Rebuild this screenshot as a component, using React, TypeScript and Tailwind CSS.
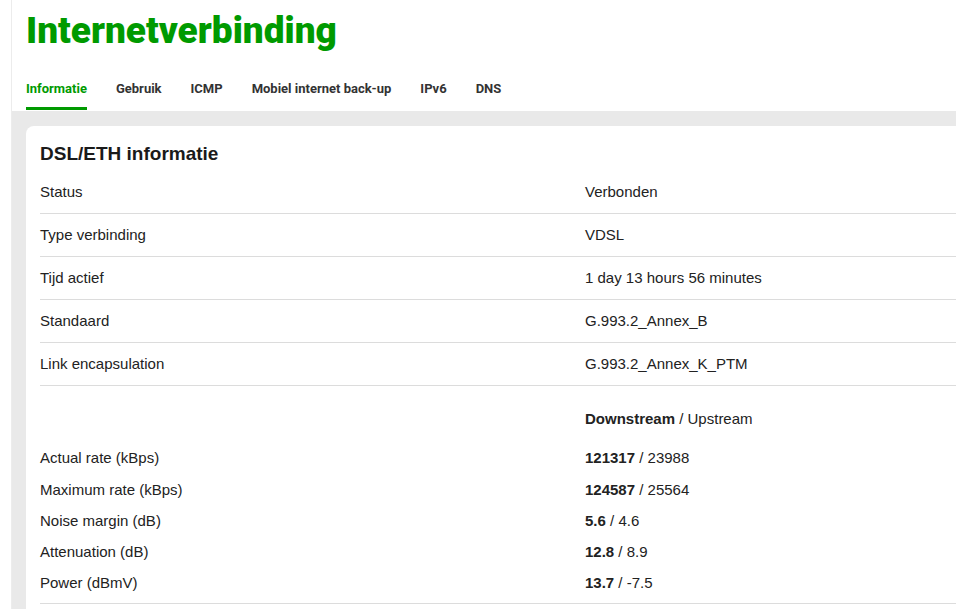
import React from 'react'

const tabs = ['Informatie', 'Gebruik', 'ICMP', 'Mobiel internet back-up', 'IPv6', 'DNS']

const info = [
  ['Status', 'Verbonden'],
  ['Type verbinding', 'VDSL'],
  ['Tijd actief', '1 day 13 hours 56 minutes'],
  ['Standaard', 'G.993.2_Annex_B'],
  ['Link encapsulation', 'G.993.2_Annex_K_PTM'],
]

const stats = [
  ['Actual rate (kBps)', '121317', '23988'],
  ['Maximum rate (kBps)', '124587', '25564'],
  ['Noise margin (dB)', '5.6', '4.6'],
  ['Attenuation (dB)', '12.8', '8.9'],
  ['Power (dBmV)', '13.7', '-7.5'],
]

const Row = ({ label, children, className }: { label: string; children: React.ReactNode; className: string }) => (
  <div className={`grid grid-cols-[545px_1fr] items-center ${className}`}>
    <span>{label}</span>
    <span>{children}</span>
  </div>
)

export default function App() {
  return (
    <div className="flex w-screen h-screen overflow-hidden bg-white text-[15px] text-[#222]" style={{ fontFamily: '"Liberation Sans", Arial, sans-serif' }}>
      <div className="w-[12px] shrink-0 border-r border-[#ececec]" />

      <main className="flex-1 flex flex-col min-w-0">
        <header className="pl-[14px]" style={{ fontFamily: 'Roboto, "Liberation Sans", sans-serif' }}>
          <h1 className="pt-[7px] text-[37px] leading-[47px] font-black text-[#009a00]">
            Internetverbinding
          </h1>
          <nav className="mt-[26px] flex gap-[29px]">
            {tabs.map((tab, i) => (
              <div key={tab} className="flex flex-col">
                <span className={`text-[13px] leading-[18px] font-bold ${i === 0 ? 'text-[#009a00]' : 'text-[#333]'}`}>{tab}</span>
                <span className={`mt-[9px] mb-[1px] h-[3px] ${i === 0 ? 'bg-[#009a00]' : ''}`} />
              </div>
            ))}
          </nav>
        </header>

        <section className="flex-1 bg-[#e9e9e9] pt-[15px] pl-[14px]">
          <div className="h-full bg-white rounded-tl-lg pl-[14px] pt-[16px]">
            <h2 className="text-[19px] leading-[24px] font-bold text-[#1a1a1a]">DSL/ETH informatie</h2>

            <div className="mt-[5px]">
              {info.map(([label, value]) => (
                <Row key={label} label={label} className="h-[43px] border-b border-[#dcdcdc]">
                  {value}
                </Row>
              ))}
            </div>

            <div className="pt-[18px] pb-[4px] border-b border-[#dcdcdc]">
              <Row label="" className="h-[31px]">
                <b>Downstream</b> / Upstream
              </Row>
              <div className="mt-[8px]">
                {stats.map(([label, down, up]) => (
                  <Row key={label} label={label} className="h-[31.25px]">
                    <b>{down}</b> / {up}
                  </Row>
                ))}
              </div>
            </div>
          </div>
        </section>
      </main>
    </div>
  )
}
